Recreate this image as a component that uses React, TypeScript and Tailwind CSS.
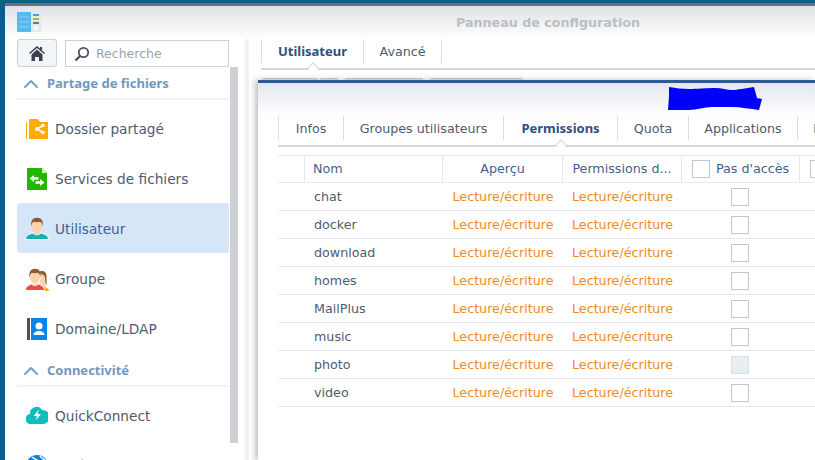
import { ChevronUp } from 'lucide-react'

const navTop = [
  { label: 'Dossier partagé', icon: <FolderIcon /> },
  { label: 'Services de fichiers', icon: <FileIcon /> },
  { label: 'Utilisateur', icon: <UserIcon />, active: true },
  { label: 'Groupe', icon: <GroupIcon /> },
  { label: 'Domaine/LDAP', icon: <DomainIcon /> },
]

const rows = ['chat', 'docker', 'download', 'homes', 'MailPlus', 'music', 'photo', 'video']

function FolderIcon() {
  return (
    <svg width="22" height="20" viewBox="0 0 22 20">
      <path d="M0 3h1v17H0z" fill="#ffab00" />
      <path d="M3 0h9l2 3h8v17H3z" fill="#ffab00" />
      <path d="M17 6.500l-6 3.500 6 3.500" stroke="#fff" strokeWidth="1.500" fill="none" />
      <circle cx="17" cy="6.500" r="1.800" fill="#fff" />
      <circle cx="11" cy="10" r="2" fill="#fff" />
      <circle cx="17" cy="13.500" r="1.800" fill="#fff" />
    </svg>
  )
}

function FileIcon() {
  return (
    <svg width="22" height="22" viewBox="0 0 22 22">
      <path d="M1 0h15l5 5v17H1z" fill="#22b800" />
      <path d="M16 0l5 5h-5z" fill="#d4f2c8" />
      <path d="M3.500 10.500L8 7v2.200h4.500v2.600H8V14zM18.500 14.500L14 11v2.200H9.500v2.600H14V18z" fill="#fff" />
    </svg>
  )
}

function UserIcon() {
  return (
    <svg width="24" height="23" viewBox="0 0 24 23">
      <path d="M0.500 22.500c0-4 3-5 7.500-6.500 2 2.500 6 2.500 8 0 4.500 1.500 7.500 2.500 7.500 6.500z" fill="#12b0b5" stroke="#fff" strokeWidth="1" />
      <path d="M9 12h6v4c-1 2.500-5 2.500-6 0z" fill="#f8d3ad" />
      <ellipse cx="12" cy="8.500" rx="5.500" ry="7.500" fill="#f8d3ad" />
      <path d="M6.300 9.500C5.500 4 7.500 0.800 12 0.800s6.500 3.200 5.700 8.700c-.5-3-1.500-4.500-3-4.700-2 .5-4.500.5-6 0-1.200.5-2 2-2.400 4.700z" fill="#8a5a33" />
    </svg>
  )
}

function GroupIcon() {
  return (
    <svg width="24" height="23" viewBox="0 0 24 23">
      <path d="M17 23c0-2 1-4 3-4 2 1 4 2 4 4z" fill="#ffab00" />
      <path d="M15 4c4-1 6 2 6 6 0 3-.5 5 1 7l-4 3-3-2z" fill="#f8d3ad" />
      <path d="M15 3.500c4-1.500 7 1 6.500 6.500 0 3 0 5 .5 7-1.500-2-2-4-2-7 0-2.500-2-4-5-4z" fill="#8a5a33" />
      <path d="M0.500 22.500c0-4 2.500-5 6-6.500 2 2 5 2 7 0 3.500 1.500 6 2.500 6 6.500z" fill="#f04747" stroke="#fff" strokeWidth="1" />
      <path d="M7.500 12h5v4c-1 2-4 2-5 0z" fill="#f8d3ad" />
      <ellipse cx="10" cy="8.500" rx="5.500" ry="7.500" fill="#f8d3ad" stroke="#fff" strokeWidth="1" />
      <path d="M4.500 9.500C3.700 4 5.700 0.800 10 0.800s6.300 3.200 5.500 8.700c-.5-3-1.500-4.500-3-4.700-2 .5-4 .5-5.500 0-1.200.5-2 2-2.500 4.700z" fill="#8a5a33" />
    </svg>
  )
}

function DomainIcon() {
  return (
    <svg width="22" height="22" viewBox="0 0 22 22">
      <rect x="1" y="0" width="3" height="22" fill="#4a5460" />
      <rect x="5" y="0" width="16" height="22" fill="#0a84e6" />
      <circle cx="13" cy="8" r="3.500" fill="#fff" />
      <path d="M7.500 17c0-3 3-4 5.500-4s5.500 1 5.500 4z" fill="#fff" />
    </svg>
  )
}

function CloudIcon() {
  return (
    <svg width="22" height="18" viewBox="0 0 22 18" className="-mt-[2px]">
      <path d="M5 18a5 5 0 0 1-1-10 6.500 6.500 0 0 1 12-4 6 6 0 0 1 1.500 14z" fill="#10bdb9" />
      <path d="M13 3.500L7.500 10h3.500l-1.500 4.500L15 8h-3.500z" fill="#fff" />
    </svg>
  )
}

function GlobeIcon() {
  return (
    <svg width="22" height="22" viewBox="0 0 22 22">
      <circle cx="11" cy="11" r="11" fill="#0a7fe0" />
      <path d="M6 2c2 2 5 2 6 4s-3 3-5 2-3 0-5 1M14 1c1 2 4 3 6 5" stroke="#fff" strokeWidth="1.500" fill="none" />
    </svg>
  )
}

function HomeIcon() {
  return (
    <svg width="16" height="15" viewBox="0 0 16 15">
      <path d="M8 0l8 7-1 1-7-6-7 6-1-1z" fill="#39424e" />
      <path d="M2.500 8.500L8 3.500l5.500 5V15H10v-4H6v4H2.500z" fill="#39424e" />
      <rect x="11" y="1" width="2" height="3" fill="#39424e" />
    </svg>
  )
}

function SearchIcon() {
  return (
    <svg width="16" height="16" viewBox="0 0 16 16">
      <circle cx="9.500" cy="6.500" r="4.700" fill="none" stroke="#4a5460" strokeWidth="1.800" />
      <path d="M6 10l-4.500 4.500" stroke="#4a5460" strokeWidth="2.400" />
    </svg>
  )
}

function SectionHead({ title }: { title: string }) {
  return (
    <div className="h-[30px] mt-[3px] mb-[4px] flex items-center gap-[4px] pl-[2px] border-b-2 border-[#eef2f6]">
      <ChevronUp size={24} strokeWidth={2} className="text-[#7da0bd]" />
      <span className="font-bold font-['Noto_Sans',sans-serif] text-[13px] text-[#6f9abd]">{title}</span>
    </div>
  )
}

function NavItem({ label, icon, active }: { label: string; icon: React.ReactNode; active?: boolean }) {
  return (
    <div className={`h-[50px] flex items-center rounded-[3px] ${active ? '-mt-[1px] mb-[1px] bg-[#d5e6f8] text-[#3f5f96]' : 'text-[#4f5b6f]'}`}>
      <span className="w-[38px] flex justify-center pl-[2px] shrink-0">{icon}</span>
      <span className={`text-[13.7px] ${active ? 'mt-[2px]' : ''}`}>{label}</span>
    </div>
  )
}

function Tab({ label, active, width }: { label: string; active?: boolean; width: string }) {
  return (
    <div className={`${width} shrink-0 h-[24px] pt-[2px] flex items-center justify-center border-r border-[#d5dfe9] relative ${active ? "font-bold font-['Noto_Sans',sans-serif] text-[13px] text-[#2f4f7f]" : 'text-[12.7px] text-[#4f5b6f]'}`}>
      {label}
      {active && (
        <span className="absolute left-1/2 -ml-[4px] top-[25px] w-[8px] h-[8px] rotate-45 bg-white border-l border-t border-[#d4d6d8]" />
      )}
    </div>
  )
}

export default function App() {
  return (
    <div className="h-[460px] w-[815px] overflow-hidden bg-[#0b5f86] pt-[3px] pl-[5px] font-['DejaVu_Sans',sans-serif]">
      <div className="h-full bg-white border-t-[3px] border-[#6b7075] flex flex-col">
        {/* Title bar */}
        <div className="h-[33px] shrink-0 bg-gradient-to-b from-[#dfe2e5] to-white flex items-start relative">
          <svg width="24" height="21" viewBox="0 0 24 21" className="ml-[12px] mt-[6px]">
            <rect x="0" y="0" width="14" height="20" fill="#57b7ef" />
            <rect x="14" y="0" width="10" height="20" fill="#e3e8ec" />
            <path d="M2 5h10M2 10h10M2 15h10" stroke="#8fd0f5" />
            <path d="M16 3h6" stroke="#3f9fd8" strokeWidth="2" />
            <path d="M16 7h6" stroke="#8cc63f" strokeWidth="2" />
            <path d="M16 11h6" stroke="#4a5460" strokeWidth="1.500" />
            <circle cx="19" cy="16" r="2.500" fill="#f5f7f8" />
          </svg>
          <span className="absolute left-[451px] top-[7px] font-bold text-[12.7px] text-[#bcbfc3]">Panneau de configuration</span>
        </div>

        <div className="flex flex-1 min-h-0">
          {/* Sidebar */}
          <aside className="w-[212px] shrink-0 ml-[12px] flex flex-col">
            <div className="flex gap-[8px] h-[28px] shrink-0">
              <div className="w-[40px] h-[28px] border border-[#c5d2df] rounded-[3px] bg-[#f3f6f9] flex items-center justify-center">
                <HomeIcon />
              </div>
              <div className="w-[164px] mt-[1px] h-[27px] border border-[#c5d2df] flex items-center gap-[6px] pl-[8px] text-[12.5px] text-[#9aa3ad]">
                <SearchIcon />
                <span className="mt-[2px]">Recherche</span>
              </div>
            </div>
            <div className="flex-1 min-h-0 overflow-hidden">
              <SectionHead title="Partage de fichiers" />
              {navTop.map(n => (
                <NavItem key={n.label} {...n} />
              ))}
              <SectionHead title="Connectivité" />
              <NavItem label="QuickConnect" icon={<CloudIcon />} />
              <NavItem label="Accès externe" icon={<GlobeIcon />} />
            </div>
          </aside>

          {/* Scrollbar */}
          <div className="w-[8px] ml-[1px] mt-[28px] mb-[17px] bg-[#cfd0d3] shrink-0" />

          {/* Right side */}
          <div className="flex-1 min-w-0 ml-[7px] border-l-4 border-[#f1f2f4] flex flex-col">
            <div className="ml-[12px] h-[31px] shrink-0 border-b-2 border-[#d4d6d8] flex items-start">
              <div className="flex border-l border-[#d5dfe9]">
                <Tab label="Utilisateur" active width="w-[102px]" />
                <Tab label="Avancé" width="w-[78px]" />
              </div>
            </div>

            {/* Buttons hidden behind the dialog */}
            <div className="mt-[8px] ml-[13px] h-[2px] shrink-0 flex">
              <span className="w-[56px] bg-[#e6ebf0] border-t border-x border-[#c5d2df] rounded-t-[3px]" />
              <span className="w-[18px] ml-[2px] bg-[#e6ebf0] border-t border-x border-[#c5d2df] rounded-t-[3px]" />
              <span className="w-[78px] ml-[7px] bg-[#e6ebf0] border-t border-x border-[#c5d2df] rounded-t-[3px]" />
              <span className="w-[93px] ml-[7px] bg-[#e6ebf0] border-t border-x border-[#c5d2df] rounded-t-[3px]" />
            </div>

            {/* Dialog */}
            <div className="ml-[9px] flex-1 bg-white border-t-[3px] border-[#2a5b95] shadow-[-3px_0_6px_rgba(0,0,0,0.25)] flex flex-col min-h-0 overflow-hidden">
              <div className="h-[33px] bg-gradient-to-b from-[#e3e7ec] to-white shrink-0 relative">
                <svg width="94" height="24" viewBox="0 0 94 24" className="absolute left-[410px] top-[4px]">
                  <path d="M1 0C8 1 14 2 21 2S40 1 47 1s12 2 17 2S78 1 86 0l3 11 5 1-3 11c-9-1-18-3-27-3H44c-8 0-15 3-23 3H0l1-14z" fill="#0000ff" />
                </svg>
              </div>
              <div className="h-[31px] ml-[20px] shrink-0 border-b-2 border-[#d4d6d8] flex items-start">
                <div className="border-l border-[#d5dfe9] flex">
                  <Tab label="Infos" width="w-[65px]" />
                  <Tab label="Groupes utilisateurs" width="w-[160px]" />
                  <Tab label="Permissions" active width="w-[114px]" />
                  <Tab label="Quota" width="w-[71px]" />
                  <Tab label="Applications" width="w-[109px]" />
                  <Tab label="Limitation" width="w-[95px]" />
                </div>
              </div>

              {/* Table */}
              <div className="ml-[20px] mt-[8px] border-t border-[#e3e9ef] overflow-hidden">
                <div className="flex h-[27px] border-b border-[#e3e9ef] text-[12.7px] text-[#3f5f8f]">
                  <div className="w-[27px] shrink-0 border-r border-[#e3e9ef]" />
                  <div className="w-[138px] shrink-0 border-r border-[#e3e9ef] flex items-center pl-[8px]">Nom</div>
                  <div className="w-[120px] shrink-0 border-r border-[#e3e9ef] flex items-center justify-center">Aperçu</div>
                  <div className="w-[119px] shrink-0 border-r border-[#e3e9ef] flex items-center justify-center">Permissions d...</div>
                  <div className="w-[118px] shrink-0 border-r border-[#e3e9ef] flex items-center pl-[10px] gap-[6px]">
                    <span className="w-[18px] h-[18px] border border-[#bec8d4]" />
                    Pas d'accès
                  </div>
                  <div className="flex-1 flex items-center pl-[10px]">
                    <span className="w-[18px] h-[18px] shrink-0 border border-[#bec8d4]" />
                  </div>
                </div>
                {rows.map(r => (
                  <div key={r} className="flex h-[28px] items-center border-b border-[#e3e9ef] text-[12.7px]">
                    <div className="w-[27px]" />
                    <div className="w-[138px] pl-[9px] text-[#4f5b6f]">{r}</div>
                    <div className="w-[120px] text-center text-[#f08a24]">Lecture/écriture</div>
                    <div className="w-[119px] text-center text-[#f08a24]">Lecture/écriture</div>
                    <div className="w-[118px] flex justify-center pr-[2px]">
                      <span className={`w-[18px] h-[18px] border ${r === 'photo' ? 'bg-[#e9eef3] border-[#d8dfe7]' : 'border-[#bec8d4]'}`} />
                    </div>
                  </div>
                ))}
              </div>
            </div>
          </div>
        </div>
      </div>
    </div>
  )
}
